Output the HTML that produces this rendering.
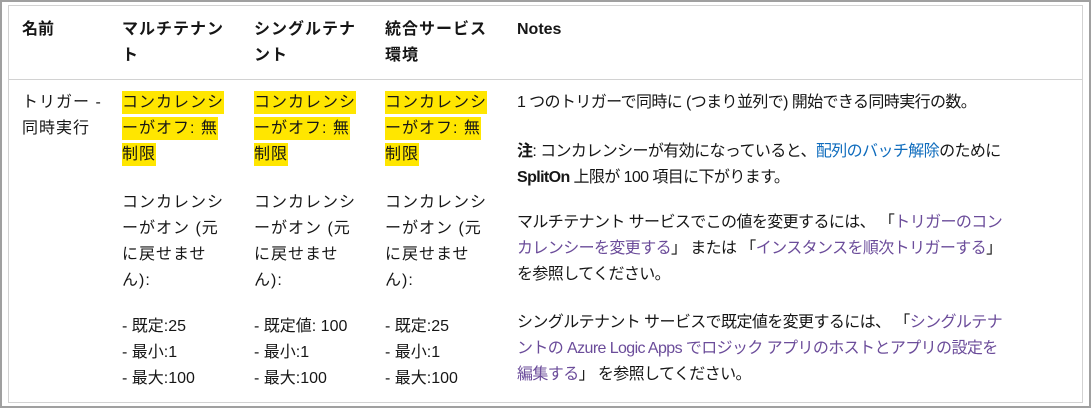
<!DOCTYPE html>
<html><head><meta charset="utf-8"><style>
html,body{margin:0;padding:0;background:#fff;}
body{width:1091px;height:408px;position:relative;overflow:hidden;font-family:"Liberation Sans","Noto Sans CJK JP",sans-serif;font-size:16px;color:#161616;}
.frame{position:absolute;left:0;top:0;width:1087px;height:404px;border:2px solid #a0a0a0;}
.inner{position:absolute;left:8px;top:5px;width:1073px;height:396px;border:1px solid #d2d2d2;}
.hl{position:absolute;left:8px;top:79px;width:1074px;height:1px;background:#d2d2d2;}
.t{position:absolute;line-height:26px;white-space:nowrap;}
.c{letter-spacing:1px;}
.n{letter-spacing:-0.6px;}
b{font-weight:bold;}
.y{background:#ffe600;padding:3px 0;}
.a{color:#0f6cbd;}
.v{color:#6b4c9a;}
</style></head><body>
<div class="frame"></div>
<div class="inner"></div>
<div class="hl"></div>
<div class="t" style="left:22px;top:17px"><b>名前</b></div>
<div class="t c" style="left:122px;top:17px"><b>マルチテナン<br>ト</b></div>
<div class="t c" style="left:254px;top:17px"><b>シングルテナ<br>ント</b></div>
<div class="t c" style="left:385px;top:17px"><b>統合サービス<br>環境</b></div>
<div class="t" style="left:517px;top:17px"><b>Notes</b></div>

<div class="t c" style="left:22px;top:90px">トリガー -<br>同時実行</div>

<div class="t c" style="left:122px;top:90px"><span class="y">コンカレンシ</span><br><span class="y">ーがオフ: 無</span><br><span class="y">制限</span></div>
<div class="t c" style="left:254px;top:90px"><span class="y">コンカレンシ</span><br><span class="y">ーがオフ: 無</span><br><span class="y">制限</span></div>
<div class="t c" style="left:385px;top:90px"><span class="y">コンカレンシ</span><br><span class="y">ーがオフ: 無</span><br><span class="y">制限</span></div>

<div class="t c" style="left:122px;top:190px">コンカレンシ<br>ーがオン (元<br>に戻せませ<br>ん):</div>
<div class="t c" style="left:254px;top:190px">コンカレンシ<br>ーがオン (元<br>に戻せませ<br>ん):</div>
<div class="t c" style="left:385px;top:190px">コンカレンシ<br>ーがオン (元<br>に戻せませ<br>ん):</div>

<div class="t" style="left:122px;top:314px">- 既定:25<br>- 最小:1<br>- 最大:100</div>
<div class="t" style="left:254px;top:314px">- 既定値: 100<br>- 最小:1<br>- 最大:100</div>
<div class="t" style="left:385px;top:314px">- 既定:25<br>- 最小:1<br>- 最大:100</div>

<div class="t n" style="left:517px;top:90px">1 つのトリガーで同時に (つまり並列で) 開始できる同時実行の数。</div>
<div class="t n" style="left:517px;top:139px"><b>注</b>: コンカレンシーが有効になっていると、<span class="a">配列のバッチ解除</span>のために<br><b>SplitOn</b> 上限が 100 項目に下がります。</div>
<div class="t n" style="left:517px;top:210px">マルチテナント サービスでこの値を変更するには、 「<span class="v">トリガーのコン</span><br><span class="v">カレンシーを変更する</span>」 または 「<span class="v">インスタンスを順次トリガーする</span>」<br>を参照してください。</div>
<div class="t n" style="left:517px;top:310px">シングルテナント サービスで既定値を変更するには、 「<span class="v">シングルテナ</span><br><span class="v">ントの Azure Logic Apps でロジック アプリのホストとアプリの設定を</span><br><span class="v">編集する</span>」 を参照してください。</div>
</body></html>
